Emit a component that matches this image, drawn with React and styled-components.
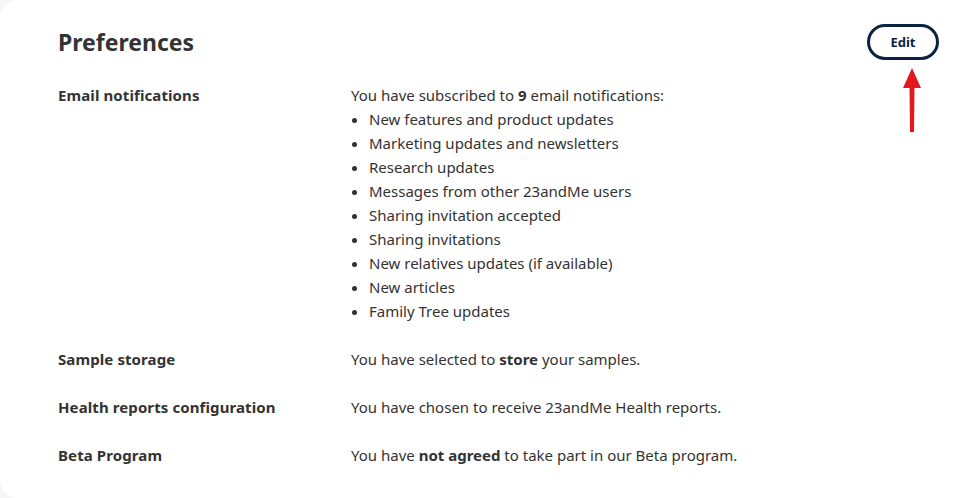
import React from "react";
import styled, { createGlobalStyle } from "styled-components";

const Global = createGlobalStyle`
  html, body { margin: 0; padding: 0; background: #f6f6f6; }
  body { font-family: "Noto Sans", "Open Sans", Arial, sans-serif; color: #333; }
  * { box-sizing: border-box; }
`;

const Card = styled.section`
  position: relative;
  background: #fff;
  border-radius: 18px;
  width: 980px;
  min-height: 498px;
  padding: 24px 24px 0 58px;
`;

const Header = styled.div`
  display: flex;
  justify-content: space-between;
  align-items: center;
  height: 36px;
  width: 881px;
`;

const Title = styled.h2`
  margin: 0;
  font-size: 23px;
  font-weight: 700;
  color: #333;
  font-family: "Noto Sans", Arial, sans-serif;
`;

const EditButton = styled.button`
  width: 72px;
  height: 36px;
  border: 3px solid #0b2340;
  border-radius: 18px;
  background: #fff;
  color: #0b2340;
  font-family: "Noto Sans", Arial, sans-serif;
  font-weight: 700;
  font-size: 13px;
  cursor: pointer;
`;

const Rows = styled.div`
  display: flex;
  flex-direction: column;
  gap: 24px;
  margin-top: 23px;
`;

const Row = styled.div`
  display: grid;
  grid-template-columns: 293px 1fr;
  font-size: 15px;
  line-height: 24px;
`;

const Label = styled.div`
  font-weight: 700;
  color: #333;
  letter-spacing: 0.1px;
`;

const Value = styled.div`
  color: #333;
  b { font-weight: 700; }
`;

const List = styled.ul`
  margin: 0;
  padding: 0 0 0 18px;
`;

const Arrow = styled.svg`
  position: absolute;
  left: 900px;
  top: 66px;
`;

const items = [
  "New features and product updates",
  "Marketing updates and newsletters",
  "Research updates",
  "Messages from other 23andMe users",
  "Sharing invitation accepted",
  "Sharing invitations",
  "New relatives updates (if available)",
  "New articles",
  "Family Tree updates",
];

export default function App() {
  return (
    <>
      <Global />
      <Card>
        <Header>
          <Title>Preferences</Title>
          <EditButton>Edit</EditButton>
        </Header>
        <Arrow width="24" height="70" viewBox="0 0 24 70">
          <path d="M12 2 L21 22 L14.5 22 L14 66 L10 66 L9.5 22 L3 22 Z" fill="#e3191f" />
        </Arrow>
        <Rows>
          <Row>
            <Label>Email notifications</Label>
            <Value>
              You have subscribed to <b>9</b> email notifications:
              <List>
                {items.map((t) => (
                  <li key={t}>{t}</li>
                ))}
              </List>
            </Value>
          </Row>
          <Row>
            <Label>Sample storage</Label>
            <Value>
              You have selected to <b>store</b> your samples.
            </Value>
          </Row>
          <Row>
            <Label>Health reports configuration</Label>
            <Value>You have chosen to receive 23andMe Health reports.</Value>
          </Row>
          <Row>
            <Label>Beta Program</Label>
            <Value>
              You have <b>not agreed</b> to take part in our Beta program.
            </Value>
          </Row>
        </Rows>
      </Card>
    </>
  );
}
